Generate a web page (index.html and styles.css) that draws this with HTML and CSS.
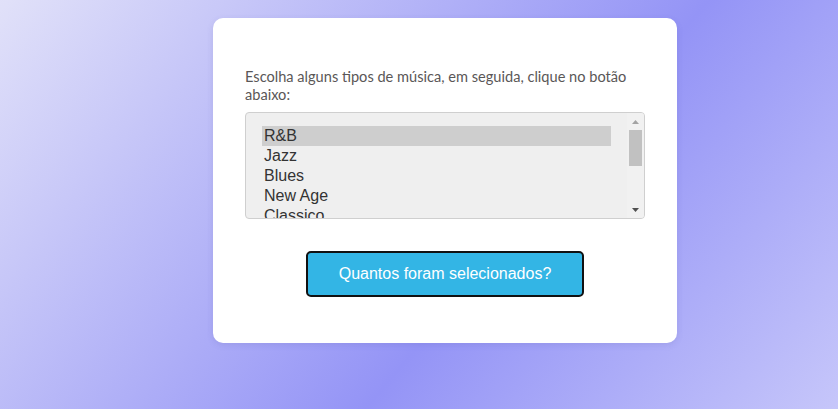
FILE: index.html
```html
<!DOCTYPE html>
<html lang="pt">
<head>
<meta charset="utf-8">
<title>Tipos de música</title>
<link rel="stylesheet" href="styles.css">
</head>
<body>
<main class="card">
  <p class="prompt">Escolha alguns tipos de música, em seguida, clique no botão abaixo:</p>
  <div class="genres">
    <ul class="genre-list" role="listbox" aria-multiselectable="true">
      <li class="genre selected" role="option" aria-selected="true">R&amp;B</li>
      <li class="genre" role="option">Jazz</li>
      <li class="genre" role="option">Blues</li>
      <li class="genre" role="option">New Age</li>
      <li class="genre" role="option">Classico</li>
    </ul>
    <div class="scrollbar" aria-hidden="true">
      <div class="sb-btn">
        <svg width="7" height="4" viewBox="0 0 7 4"><path d="M0 4 L3.5 0 L7 4 Z" fill="#a3a3a3"/></svg>
      </div>
      <div class="sb-track"><div class="sb-thumb"></div></div>
      <div class="sb-btn">
        <svg width="7" height="4" viewBox="0 0 7 4"><path d="M0 0 L7 0 L3.5 4 Z" fill="#505050"/></svg>
      </div>
    </div>
  </div>
  <div class="actions">
    <button class="count-btn" type="button">Quantos foram selecionados?</button>
  </div>
</main>
</body>
</html>
```

FILE: styles.css
```css
html, body {
  margin: 0;
  height: 100%;
}

body {
  background: linear-gradient(130deg, #e1e1f9 0%, #9494f6 60%, #c6c6fa 100%);
  font-family: "Liberation Sans", Arial, sans-serif;
  overflow: hidden;
}

.card {
  box-sizing: border-box;
  width: 464px;
  margin: 18px 0 0 213px;
  padding: 50px 32px 46px;
  background: #fff;
  border-radius: 10px;
  box-shadow: 0 2px 6px rgba(80, 80, 160, 0.15);
}

.prompt {
  margin: 0 0 8px;
  font-family: "Lato", "Open Sans", sans-serif;
  font-size: 14.6px;
  line-height: 18px;
  color: #5a5757;
}

.genres {
  display: flex;
  box-sizing: border-box;
  width: 400px;
  height: 107px;
  border: 1px solid #cfcfcf;
  border-radius: 4px;
  background: #efefef;
  overflow: hidden;
}

.genre-list {
  flex: 1;
  margin: 0;
  padding: 13px 16px 0;
  list-style: none;
  overflow: hidden;
  font-family: "Liberation Sans", Arial, sans-serif;
  font-size: 16px;
  color: #333;
}

.genre {
  padding: 0 2px;
  height: 20px;
  line-height: 19px;
}

.genre.selected {
  background: #cecece;
}

.scrollbar {
  display: flex;
  flex-direction: column;
  width: 17px;
  background: #f1f1f1;
}

.sb-btn {
  display: flex;
  align-items: center;
  justify-content: center;
  height: 17px;
}

.sb-btn svg {
  display: block;
}

.sb-track {
  flex: 1;
  padding: 0 2px;
}

.sb-thumb {
  height: 36px;
  background: #c1c1c1;
}

.actions {
  display: flex;
  justify-content: center;
  margin-top: 32px;
}

.count-btn {
  box-sizing: border-box;
  width: 278px;
  height: 46px;
  padding: 0 20px;
  border: 2px solid #111;
  border-radius: 5px;
  background: #33b5e5;
  color: #fff;
  font-family: "Liberation Sans", Arial, sans-serif;
  font-size: 16px;
  cursor: pointer;
}
```
